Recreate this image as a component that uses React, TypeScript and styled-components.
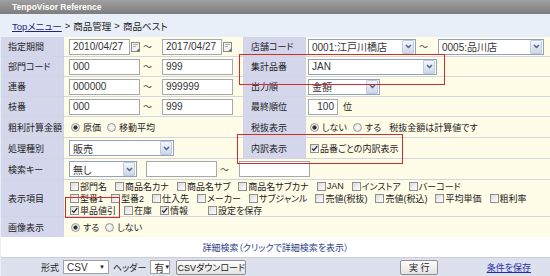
import React from 'react';
import styled, { createGlobalStyle } from 'styled-components';

const GlobalStyle = createGlobalStyle`
  html, body { margin: 0; padding: 0; }
  body {
    font-family: "Liberation Sans", "Noto Sans CJK JP", sans-serif;
    font-size: 9px;
    color: #222;
    font-feature-settings: "palt";
  }
`;

const Page = styled.div`
  position: relative;
  width: 550px;
  height: 276px;
  overflow: hidden;
  background: #e9eff8;
  display: flex;
  flex-direction: column;
`;

const TitleBar = styled.div`
  flex: none;
  height: 14px;
  padding-left: 12px;
  display: flex;
  align-items: center;
  background: linear-gradient(#a0a0a0, #7d7d7d);
  color: #fff;
  font-weight: bold;
  font-size: 8.5px;
`;

const Breadcrumb = styled.div`
  flex: none;
  height: 23px;
  padding-left: 12px;
  display: flex;
  align-items: center;
  gap: 3px;
  font-size: 9.5px;
`;

const CrumbLink = styled.a`
  color: #1d237f;
  text-decoration: underline;
`;

const FormGrid = styled.div`
  flex: none;
  display: grid;
  grid-template-columns: 62px 179px 61px 1fr;
  grid-template-rows: 19px 19px 19px 19px 20px 20px 20px 36px 20px;
  gap: 1px;
  margin-left: 1px;
  background: #d2d4e0;
`;

const Label = styled.div`
  background: #d4d6ec;
  padding-left: 7px;
  display: flex;
  align-items: center;
  font-size: 9px;
`;

const Value = styled.div<{ $span?: number; $pad?: number }>`
  grid-column: span ${(p) => p.$span ?? 1};
  background: #fffce8;
  padding-left: ${(p) => p.$pad ?? 5}px;
  display: flex;
  align-items: center;
  white-space: nowrap;
`;

const TextInput = styled.div<{ $w: number; $right?: boolean }>`
  box-sizing: border-box;
  width: ${(p) => p.$w}px;
  height: 16px;
  border: 1px solid #a4a9ae;
  background: #fff;
  padding: 0 3px;
  display: flex;
  align-items: center;
  justify-content: ${(p) => (p.$right ? 'flex-end' : 'flex-start')};
  font-size: 10px;
  color: #333;
`;

const Tilde = styled.span`
  box-sizing: border-box;
  width: 22px;
  padding-left: 3px;
  color: #444;
`;

const SelectBox = styled.div<{ $w: number }>`
  box-sizing: border-box;
  width: ${(p) => p.$w}px;
  height: 16px;
  border: 1px solid #8ea3c0;
  background: #fff;
  display: flex;
  align-items: center;
  font-size: 10px;
  color: #333;
`;

const SelectText = styled.span`
  flex: 1;
  padding-left: 3px;
  overflow: hidden;
`;

const SelectArrow = styled.span`
  width: 10px;
  height: 12px;
  margin-right: 1px;
  border: 1px solid #c0cbe0;
  border-radius: 1px;
  background: linear-gradient(#f4f6fb, #cdd6e8);
  display: flex;
  align-items: center;
  justify-content: center;
`;

const Choice = styled.label`
  display: inline-flex;
  align-items: center;
  margin-right: 4px;
`;

const RadioMark = styled.span<{ $on?: boolean }>`
  box-sizing: border-box;
  width: 9px;
  height: 9px;
  margin: 0 3px 0 2px;
  border-radius: 50%;
  border: 1px solid #9a9a9a;
  background: ${(p) =>
    p.$on
      ? 'radial-gradient(circle, #333 0 1.8px, #eee 2.4px)'
      : 'radial-gradient(circle, #fff, #d8d8d8)'};
`;

const CheckMark = styled.span`
  box-sizing: border-box;
  width: 9px;
  height: 9px;
  margin-right: 1px;
  border: 1px solid #8f8f8f;
  background: linear-gradient(135deg, #dcdcdc, #fff);
  display: inline-flex;
  align-items: center;
  justify-content: center;
`;

const CheckLines = styled.div`
  display: flex;
  flex-direction: column;
  align-self: flex-start;
  padding-top: 0;
`;

const CheckLine = styled.div`
  height: 12px;
  display: flex;
  align-items: center;
  gap: 4px;
`;

const Note = styled.span<{ $gap?: number }>`
  margin-left: ${(p) => p.$gap ?? 0}px;
`;

const DetailBar = styled.div`
  flex: none;
  height: 20px;
  margin-left: 1px;
  background: #fff;
  border-bottom: 1px solid #c9ccda;
  display: flex;
  align-items: center;
  justify-content: center;
  color: #2f3f86;
  font-size: 9px;
`;

const BottomBar = styled.div`
  flex: 1;
  margin-left: 1px;
  background: #dde1ee;
  display: flex;
  align-items: center;
  padding-left: 40px;
  gap: 4px;
  font-size: 9px;
`;

const MiniSelect = styled.div<{ $w: number }>`
  box-sizing: border-box;
  width: ${(p) => p.$w}px;
  height: 14px;
  border: 1px solid #a2a2a2;
  background: #fff;
  display: flex;
  align-items: center;
  justify-content: space-between;
  padding: 0 3px;
  font-size: 10px;
  color: #333;
`;

const Triangle = styled.span`
  font-size: 6px;
  color: #222;
`;

const Button = styled.div<{ $w: number; $gapLeft?: number }>`
  box-sizing: border-box;
  width: ${(p) => p.$w}px;
  height: 15px;
  margin-left: ${(p) => p.$gapLeft ?? 0}px;
  border: 1px solid #8f8f8f;
  border-radius: 2px;
  background: linear-gradient(#fdfdfd, #e3e3e3);
  display: flex;
  align-items: center;
  justify-content: center;
  font-size: 9px;
  color: #222;
`;

const SaveLink = styled.a`
  margin-left: auto;
  margin-right: 19px;
  color: #1d2fa8;
  text-decoration: underline;
`;

const Highlight = styled.div<{ $x: number; $y: number; $w: number; $h: number }>`
  position: absolute;
  left: ${(p) => p.$x}px;
  top: ${(p) => p.$y}px;
  width: ${(p) => p.$w}px;
  height: ${(p) => p.$h}px;
  box-sizing: border-box;
  border: 1.5px solid #d42a2a;
  pointer-events: none;
`;

const Chevron = () => (
  <svg width="7" height="5" viewBox="0 0 7 5">
    <path d="M1 1 L3.5 3.5 L6 1" fill="none" stroke="#4a5f86" strokeWidth="1.4" />
  </svg>
);

const CalendarIcon = () => (
  <svg width="9" height="10" viewBox="0 0 9 10" style={{ marginLeft: 1 }}>
    <rect x="0.5" y="0.5" width="8" height="9" fill="#f2f2f2" stroke="#8a8a8a" />
    <path d="M2 2.5 H7 M2 4.5 H5" stroke="#b0b0b0" strokeWidth="1" />
    <path d="M5 9.5 L8.5 6 V9.5 Z" fill="#707070" />
  </svg>
);

const Select = ({ w, text }: { w: number; text: string }) => (
  <SelectBox $w={w}>
    <SelectText>{text}</SelectText>
    <SelectArrow>
      <Chevron />
    </SelectArrow>
  </SelectBox>
);

const Radio = ({ on, children }: { on?: boolean; children: React.ReactNode }) => (
  <Choice>
    <RadioMark $on={on} />
    {children}
  </Choice>
);

const Check = ({ on, children }: { on?: boolean; children: React.ReactNode }) => (
  <Choice>
    <CheckMark>
      {on && (
        <svg width="7" height="7" viewBox="0 0 7 7">
          <path d="M1 3.6 L2.8 5.4 L6.2 1.2" fill="none" stroke="#222" strokeWidth="1.3" />
        </svg>
      )}
    </CheckMark>
    {children}
  </Choice>
);

const columnLines = [
  [
    ['部門名'], ['商品名カナ'], ['商品名サブ'], ['商品名サブカナ'], ['JAN'], ['インストア'], ['バーコード'],
  ],
  [
    ['型番1'], ['型番2'], ['仕入先'], ['メーカー'], ['サブジャンル'], ['売値(税抜)'], ['売値(税込)'], ['平均単価'], ['粗利率'],
  ],
];

const App = () => (
  <>
    <GlobalStyle />
    <Page>
      <TitleBar>TenpoVisor Reference</TitleBar>
      <Breadcrumb>
        <CrumbLink>Topメニュー</CrumbLink>
        <span>&gt;</span>
        <span>商品管理</span>
        <span>&gt;</span>
        <span>商品ベスト</span>
      </Breadcrumb>

      <FormGrid>
        <Label>指定期間</Label>
        <Value>
          <TextInput $w={61}>2010/04/27</TextInput>
          <CalendarIcon />
          <Tilde>～</Tilde>
          <TextInput $w={60}>2017/04/27</TextInput>
          <CalendarIcon />
        </Value>
        <Label>店舗コード</Label>
        <Value $pad={2}>
          <Select w={108} text="0001:江戸川橋店" />
          <Tilde>～</Tilde>
          <Select w={106} text="0005:品川店" />
        </Value>

        <Label>部門コード</Label>
        <Value>
          <TextInput $w={71}>000</TextInput>
          <Tilde>～</Tilde>
          <TextInput $w={71}>999</TextInput>
        </Value>
        <Label>集計品番</Label>
        <Value $pad={2}>
          <Select w={129} text="JAN" />
        </Value>

        <Label>連番</Label>
        <Value>
          <TextInput $w={71}>000000</TextInput>
          <Tilde>～</Tilde>
          <TextInput $w={71}>999999</TextInput>
        </Value>
        <Label>出力順</Label>
        <Value $pad={2}>
          <Select w={72} text="金額" />
        </Value>

        <Label>枝番</Label>
        <Value>
          <TextInput $w={71}>000</TextInput>
          <Tilde>～</Tilde>
          <TextInput $w={71}>999</TextInput>
        </Value>
        <Label>最終順位</Label>
        <Value $pad={2}>
          <TextInput $w={30} $right>100</TextInput>
          <Note $gap={5}>位</Note>
        </Value>

        <Label>粗利計算金額</Label>
        <Value>
          <Radio on>原価</Radio>
          <Radio>移動平均</Radio>
        </Value>
        <Label>税抜表示</Label>
        <Value $pad={2}>
          <Radio on>しない</Radio>
          <Radio>する</Radio>
          <Note $gap={4}>税抜金額は計算値です</Note>
        </Value>

        <Label>処理種別</Label>
        <Value>
          <Select w={105} text="販売" />
        </Value>
        <Label>内訳表示</Label>
        <Value $pad={4}>
          <Check on>品番ごとの内訳表示</Check>
        </Value>

        <Label>検索キー</Label>
        <Value $span={3}>
          <Select w={68} text="無し" />
          <Note $gap={9} />
          <TextInput $w={71} />
          <Tilde>～</Tilde>
          <TextInput $w={71} />
        </Value>

        <Label>表示項目</Label>
        <Value $span={3} $pad={6}>
          <CheckLines>
            {columnLines.map((line, i) => (
              <CheckLine key={i}>
                {line.map(([name]) => (
                  <Check key={name}>{name}</Check>
                ))}
              </CheckLine>
            ))}
            <CheckLine>
              <Check on>単品値引</Check>
              <Check>在庫</Check>
              <Check on>情報</Check>
              <Note $gap={8} />
              <Check>設定を保存</Check>
            </CheckLine>
          </CheckLines>
        </Value>

        <Label>画像表示</Label>
        <Value $span={3}>
          <Radio on>する</Radio>
          <Radio>しない</Radio>
        </Value>
      </FormGrid>

      <DetailBar>詳細検索（クリックで詳細検索を表示）</DetailBar>

      <BottomBar>
        <span>形式</span>
        <MiniSelect $w={46}>
          CSV<Triangle>▼</Triangle>
        </MiniSelect>
        <span>ヘッダー</span>
        <MiniSelect $w={20}>
          有<Triangle>▼</Triangle>
        </MiniSelect>
        <Button $w={70} $gapLeft={2}>CSVダウンロード</Button>
        <Button $w={38} $gapLeft={150}>実 行</Button>
        <SaveLink>条件を保存</SaveLink>
      </BottomBar>

      <Highlight $x={239} $y={54} $w={206} $h={31} />
      <Highlight $x={237} $y={134} $w={166} $h={30} />
      <Highlight $x={65} $y={197} $w={55} $h={21} />
    </Page>
  </>
);

export default App;
